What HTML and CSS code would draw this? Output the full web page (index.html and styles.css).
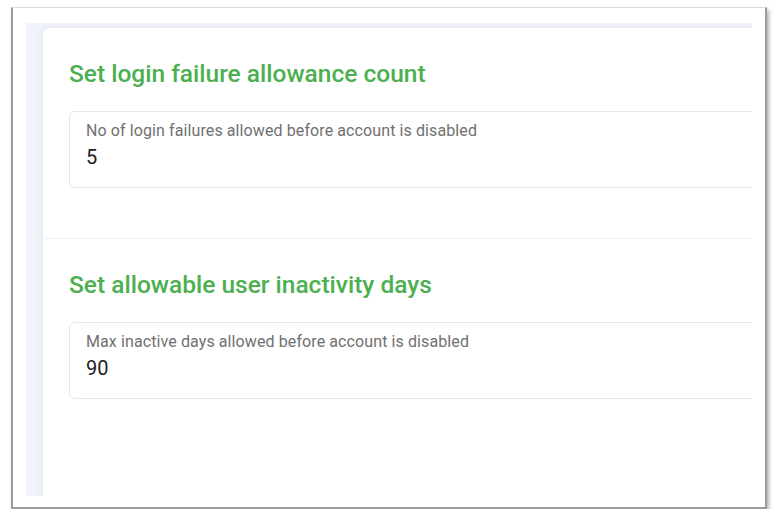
FILE: index.html
```html
<!DOCTYPE html>
<html>
<head>
<meta charset="utf-8">
<link rel="stylesheet" href="styles.css">
</head>
<body>
<div class="frame">
  <div class="content">
    <div class="card">
      <section class="section first">
        <h2 class="title">Set login failure allowance count</h2>
        <div class="field">
          <div class="label">No of login failures allowed before account is disabled</div>
          <div class="value">5</div>
        </div>
      </section>
      <div class="divider"></div>
      <section class="section second">
        <h2 class="title">Set allowable user inactivity days</h2>
        <div class="field">
          <div class="label">Max inactive days allowed before account is disabled</div>
          <div class="value">90</div>
        </div>
      </section>
    </div>
  </div>
</div>
</body>
</html>
```

FILE: styles.css
```css
* { box-sizing: border-box; }
html, body { margin: 0; background: #ffffff; }
body {
  padding: 7px 0 0 11px;
  font-family: Roboto, "Liberation Sans", sans-serif;
}
.frame {
  width: 756px;
  height: 502px;
  background: #ffffff;
  border-top: 1px solid #dcdcdc;
  border-left: 2px solid #9c9c9c;
  border-right: 2px solid #9c9c9c;
  border-bottom: 2px solid #9c9c9c;
  box-shadow: 2px 3px 4px rgba(0,0,0,0.3);
  padding: 15px 13px 11px 13px;
}
.content {
  width: 726px;
  height: 473px;
  background: #f0f3f9;
  overflow: hidden;
  padding: 5px 0 0 17px;
}
.card {
  width: 760px;
  height: 520px;
  background: #ffffff;
  border-radius: 7px 0 0 0;
  box-shadow: 0 0 8px rgba(60,60,110,0.08);
}
.section { padding: 32px 0 50px 26px; }
.section.second { padding-top: 32px; }
.title {
  margin: 0 0 23px 0;
  font-size: 24.5px;
  line-height: 28px;
  font-weight: 500;
  color: #4caf50;
}
.divider {
  height: 1px;
  background: #eef0f4;
  margin-left: -12px;
}
.field {
  border: 1px solid #e5e6ea;
  border-radius: 6px;
  height: 77px;
  padding: 10px 15px 0 16px;
}
.label {
  font-size: 16px;
  line-height: 18px;
  color: #707070;
  letter-spacing: 0.1px;
}
.value {
  margin-top: 5px;
  font-size: 20px;
  line-height: 24px;
  color: #222222;
}
```
